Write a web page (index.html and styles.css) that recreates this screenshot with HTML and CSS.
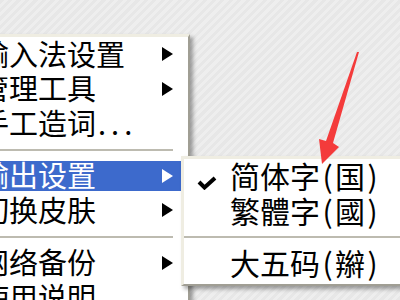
FILE: index.html
```html
<!DOCTYPE html>
<html lang="zh-CN">
<head>
  <meta charset="UTF-8" />
  <meta name="viewport" content="width=device-width, initial-scale=1.0"/>
  <title>输入法菜单</title>
  <link rel="stylesheet" href="styles.css">
</head>
<body>
  <div class="menu main-menu">
    <div class="item"><span>输入法设置</span><span class="arrow"></span></div>
    <div class="item"><span>管理工具</span><span class="arrow"></span></div>
    <div class="item"><span>手工造词<span class="dots">...</span></span></div>
    <div class="sep"></div>
    <div class="item active"><span>输出设置</span><span class="arrow"></span></div>
    <div class="item"><span>切换皮肤</span><span class="arrow"></span></div>
    <div class="sep"></div>
    <div class="item"><span>网络备份</span><span class="arrow"></span></div>
    <div class="item"><span>使用说明</span></div>
  </div>

  <div class="menu sub-menu">
    <div class="item">
      <svg class="check" width="20" height="14" viewBox="0 0 20 14">
        <path d="M2 6 L7.5 11.5 L18 2" fill="none" stroke="#000" stroke-width="4"/>
      </svg>
      <span>简体字<span class="p">(</span>国<span class="p">)</span></span>
    </div>
    <div class="item"><span>繁體字<span class="p">(</span>國<span class="p">)</span></span></div>
    <div class="sep"></div>
    <div class="item"><span>大五码<span class="p">(</span>辮<span class="p">)</span></span></div>
  </div>

  <svg class="pointer" width="400" height="300" viewBox="0 0 400 300">
    <polygon points="359,52 333,143 339,147 322,164 319,139 326,141 357,52" fill="#f43b3b"/>
  </svg>
</body>
</html>
```

FILE: styles.css
```css
body {
  margin: 0;
  width: 400px;
  height: 300px;
  overflow: hidden;
  position: relative;
  font-family: "Noto Sans CJK SC", "Noto Sans", sans-serif;
  background: #e9e9e9 repeating-linear-gradient(135deg, #e7e7e7 0 3px, #eeeeee 3px 6px);
  color: #000;
}

.menu {
  background: #fff;
  border-top: 3px solid #efede2;
  border-left: 3px solid #efede2;
  border-right: 2px solid #a09e94;
  border-bottom: 2px solid #a09e94;
  box-shadow: 3px 3px 4px rgba(0, 0, 0, 0.35);
  box-sizing: border-box;
}

.main-menu {
  margin-top: 34px;
  margin-left: -64px;
  width: 254px;
  padding-left: 41px;
  padding-right: 15px;
}

.sub-menu {
  position: absolute;
  left: 181px;
  top: 156px;
  width: 240px;
  padding-left: 46px;
  padding-bottom: 3px;
}

.item {
  display: flex;
  align-items: center;
  height: 34.5px;
  padding-bottom: 2px;
  box-sizing: border-box;
  font-size: 29px;
  line-height: 1;
  position: relative;
}

.sub-menu .item {
  font-size: 30px;
}

.p {
  display: inline-block;
  width: 15px;
  text-align: center;
}

.main-menu .item.active {
  background: #3d6acc;
  color: #fff;
  margin: 2px -15px 2px -41px;
  padding: 0 15px 2px 41px;
  height: 30.5px;
}

.dots {
  letter-spacing: 5px;
  margin-left: 2px;
}

.arrow {
  margin-left: auto;
  margin-top: 2px;
  width: 0;
  height: 0;
  border-left: 11px solid currentColor;
  border-top: 7px solid transparent;
  border-bottom: 7px solid transparent;
}

.sep {
  height: 18px;
  display: flex;
  align-items: center;
  margin-left: -41px;
}

.sep::before {
  content: "";
  flex: 1;
  height: 2px;
  background: #bdbbb0;
}

.sub-menu .sep {
  margin-left: -46px;
}

.check {
  position: absolute;
  left: -33px;
  top: 17px;
}

.pointer {
  position: absolute;
  left: 0;
  top: 0;
}
```
